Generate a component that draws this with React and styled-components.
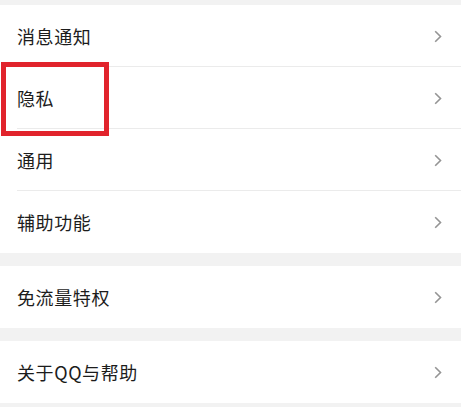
import styled, { createGlobalStyle } from "styled-components";

// Settings list: grouped rows with a chevron, one row marked with a red frame

const GlobalStyle = createGlobalStyle`
    html, body {
        margin: 0;
        padding: 0;
        background-color: #f2f2f2;
    }
`

const Page = styled.div`
    position: relative;
    width: 461px;
    height: 407px;
    overflow: hidden;
    padding-top: 5px;
    box-sizing: border-box;
    background-color: #f2f2f2;
    font-family: "Noto Sans CJK SC", "Noto Sans", sans-serif;
    display: flex;
    flex-direction: column;
    gap: 13px;
`

const Group = styled.div`
    display: flex;
    flex-direction: column;
    background-color: #ffffff;
`

const Row = styled.div`
    height: 62px;
    display: flex;
    align-items: center;
    justify-content: space-between;
    padding-left: 17px;
    padding-right: 19px;
    position: relative;
    box-sizing: border-box;
    cursor: pointer;

    &::after {
        content: "";
        display: ${props => (props.last ? "none" : "block")};
        position: absolute;
        left: 17px;
        right: 0;
        bottom: 0;
        height: 1px;
        background-color: #ebebeb;
    }
`

const Label = styled.span`
    font-size: 18px;
    color: #1c1c1c;
    letter-spacing: 0.6px;
`

const Highlight = styled.div`
    position: absolute;
    left: 1px;
    top: 62px;
    width: 108px;
    height: 74px;
    box-sizing: border-box;
    border: 5px solid #e1232c;
    pointer-events: none;
`

const Chevron = () => (
    <svg width="8" height="13" viewBox="0 0 8 13">
        <polyline points="1.2,1.2 6.5,6.5 1.2,11.8" fill="none" stroke="#949494" strokeWidth="1.6" />
    </svg>
)

const groups = [
    ["消息通知", "隐私", "通用", "辅助功能"],
    ["免流量特权"],
    ["关于QQ与帮助"],
]

const App = () => {
    return (
        <>
            <GlobalStyle />
            <Page>
                {groups.map((items, g) => (
                    <Group key={g}>
                        {items.map((item, i) => (
                            <Row key={item} last={i === items.length - 1}>
                                <Label>{item}</Label>
                                <Chevron />
                            </Row>
                        ))}
                    </Group>
                ))}
                <Highlight />
            </Page>
        </>
    )
}

export default App
